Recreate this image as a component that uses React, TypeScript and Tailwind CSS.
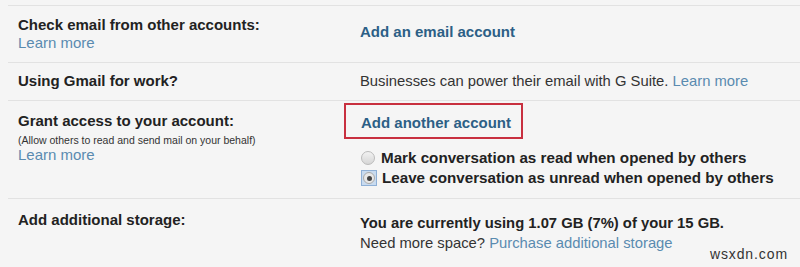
export default function App() {
  return (
    <div
      className="w-[800px] h-[267px] bg-[#f5f5f5] text-[#222] overflow-hidden relative"
      style={{ fontFamily: '"Liberation Sans", Arial, sans-serif' }}
    >
      <div className="pt-[5px] pl-[8px]">
        {/* check email */}
        <div className="flex border-t border-[#e2e2e2] h-[57px]">
          <div className="w-[352px] pl-[10px] pt-[9px]">
            <div className="text-[15px] font-bold leading-[19px]">
              Check email from other accounts:
            </div>
            <div className="text-[15px] leading-[18px] text-[#5a8bb0]">Learn more</div>
          </div>
          <div className="pt-[15px] text-[15px] font-bold text-[#2c5f86]">
            Add an email account
          </div>
        </div>

        {/* gmail for work */}
        <div className="flex border-t border-[#e2e2e2] h-[38px] items-center">
          <div className="w-[352px] pl-[10px] text-[15px] font-bold">
            Using Gmail for work?
          </div>
          <div className="text-[14.8px] text-[#333]">
            Businesses can power their email with G Suite.{" "}
            <span className="text-[#5a8bb0]">Learn more</span>
          </div>
        </div>

        {/* grant access */}
        <div className="flex border-t border-[#e2e2e2] h-[98px]">
          <div className="w-[352px] pl-[10px] pt-[10px]">
            <div className="text-[15px] font-bold leading-[19px]">
              Grant access to your account:
            </div>
            <div className="text-[10.5px] leading-[12px] mt-[4px] text-[#333]">
              (Allow others to read and send mail on your behalf)
            </div>
            <div className="text-[15px] leading-[18px] text-[#5a8bb0]">Learn more</div>
          </div>
          <div className="-ml-[16px] pt-[2px]">
            <div className="border-2 border-[#c8303f] w-[179px] h-[36px] pl-[15px] pt-[7px] text-[15px] font-bold text-[#2c5f86]">
              Add another account
            </div>
            <div className="pl-[17px] mt-[11px] flex flex-col gap-[4px] text-[15.2px] font-bold">
              <label className="flex items-center gap-[6px] h-[16px]">
                <span className="w-[14px] h-[14px] rounded-full border border-[#bbb] bg-gradient-to-b from-[#f2f2f2] to-[#d6d6d6]" />
                Mark conversation as read when opened by others
              </label>
              <label className="flex items-center gap-[5px] h-[16px]">
                <span className="w-[16px] h-[16px] bg-[#c9dbef] border border-[#8fb0d6] flex items-center justify-center">
                  <span className="w-[12px] h-[12px] rounded-full border border-[#aaa] bg-[#e8e8e8] flex items-center justify-center">
                    <span className="w-[5px] h-[5px] rounded-full bg-[#444]" />
                  </span>
                </span>
                Leave conversation as unread when opened by others
              </label>
            </div>
          </div>
        </div>

        {/* storage */}
        <div className="flex border-t border-[#e2e2e2]">
          <div className="w-[352px] pl-[10px] pt-[10px] text-[15px] font-bold">
            Add additional storage:
          </div>
          <div className="pt-[14px] text-[14.8px] leading-[20px]">
            <div className="font-bold">You are currently using 1.07 GB (7%) of your 15 GB.</div>
            <div className="text-[#333]">
              Need more space? <span className="text-[#5a8bb0]">Purchase additional storage</span>
            </div>
          </div>
        </div>
      </div>

      <div className="absolute right-[12px] bottom-[2px] text-[14px] tracking-[0.9px] text-[#333]">wsxdn.com</div>
    </div>
  );
}
